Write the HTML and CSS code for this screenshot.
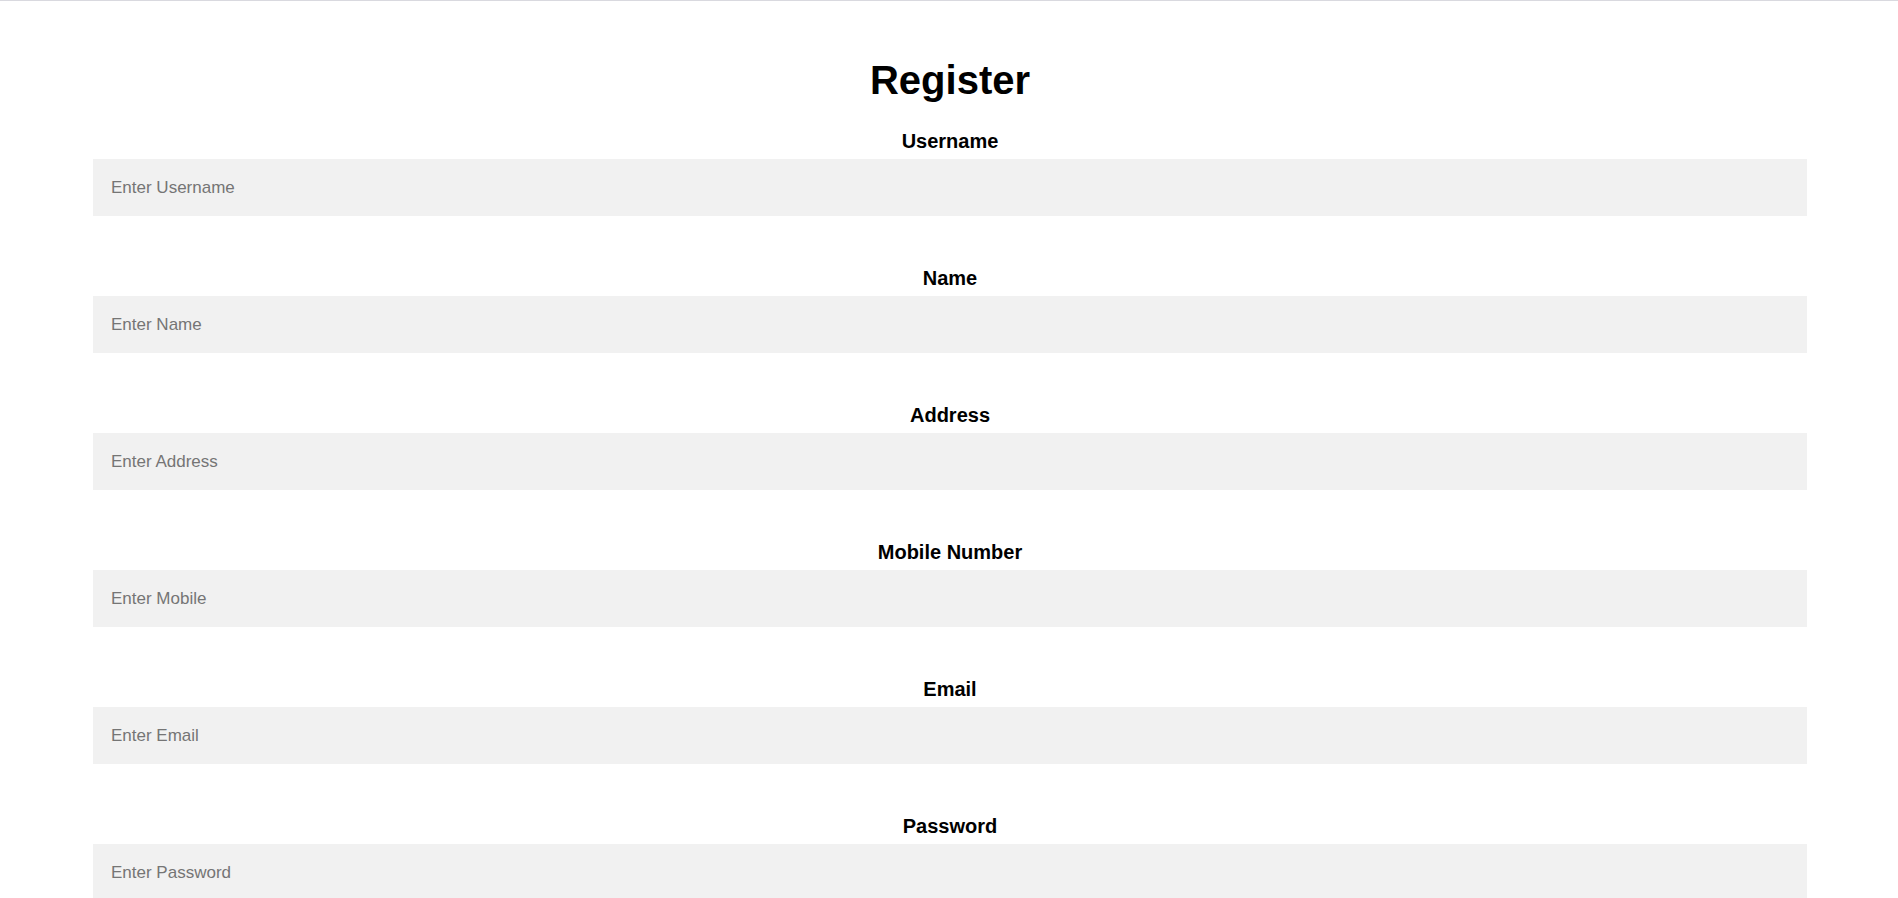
FILE: index.html
```html
<!DOCTYPE html>
<html lang="en">
<head>
<meta charset="utf-8">
<title>Register</title>
<link rel="stylesheet" href="styles.css">
</head>
<body>
<form class="register">
<h1 class="title">Register</h1>
<div class="field"><label class="label" for="username">Username</label><input class="input" id="username" type="text" placeholder="Enter Username"></div>
<div class="field"><label class="label" for="name">Name</label><input class="input" id="name" type="text" placeholder="Enter Name"></div>
<div class="field"><label class="label" for="address">Address</label><input class="input" id="address" type="text" placeholder="Enter Address"></div>
<div class="field"><label class="label" for="mobile">Mobile Number</label><input class="input" id="mobile" type="text" placeholder="Enter Mobile"></div>
<div class="field"><label class="label" for="email">Email</label><input class="input" id="email" type="text" placeholder="Enter Email"></div>
<div class="field"><label class="label" for="password">Password</label><input class="input" id="password" type="password" placeholder="Enter Password"></div>
</form>
</body>
</html>
```
FILE: styles.css
```css
* { box-sizing: border-box; }
html { scrollbar-width: none; }
body {
  margin: 0;
  background: #fff;
  color: #000;
  font-family: "Liberation Sans", Arial, sans-serif;
  border-top: 1px solid #d9d9df;
}
.register {
  padding: 56px 91px 0 93px;
  text-align: center;
}
.title {
  margin: 0 0 24px;
  font-size: 40px;
  line-height: 46px;
}
.field {
  margin-bottom: 48px;
}
.label {
  display: block;
  margin-bottom: 4px;
  font-size: 20px;
  font-weight: bold;
  line-height: 28px;
}
.input {
  display: block;
  width: 100%;
  height: 57px;
  padding: 0 18px;
  border: 0;
  border-radius: 0;
  background: #f1f1f1;
  font: 17px/20px "Liberation Sans", Arial, sans-serif;
}
.input::placeholder { color: #757575; }
```
